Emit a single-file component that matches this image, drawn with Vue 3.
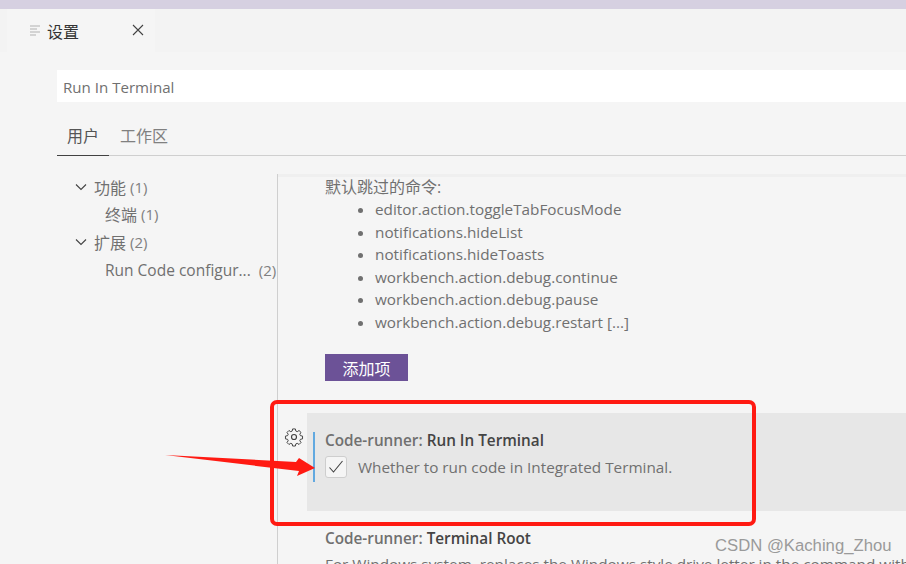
<template>
  <div class="window">
    <div class="titlebar"></div>
    <div class="tabbar">
      <div class="tab">
        <svg class="tab-icon" width="12" height="14" viewBox="0 0 12 14">
          <path d="M1 2h10M1 5h7M1 8h10M1 11h6" stroke="#c8c8c8" stroke-width="1.4" fill="none" />
        </svg>
        <span class="tab-title">设置</span>
        <svg class="tab-close" width="12" height="12" viewBox="0 0 12 12">
          <path d="M1 1l10 10M11 1L1 11" stroke="#424242" stroke-width="1.1" fill="none" />
        </svg>
      </div>
    </div>

    <div class="editor">
      <div class="search">Run In Terminal</div>
      <div class="scopes">
        <div class="scope active">用户</div>
        <div class="scope">工作区</div>
      </div>
      <div class="body">
        <ul class="tree">
          <li v-for="node in tree" :key="node.label" class="node" :class="{ child: node.child, latin: node.latin }">
            <svg v-if="!node.child" class="chevron" width="14" height="14" viewBox="0 0 14 14">
              <path d="M2 4.5l5 5 5-5" stroke="#424242" stroke-width="1.1" fill="none" />
            </svg>
            <span class="node-label">{{ node.label }}</span>
            <span class="node-count">({{ node.count }})</span>
          </li>
        </ul>
        <div class="settings">
          <div class="shadow"></div>
          <div class="intro">默认跳过的命令:</div>
          <ul class="commands">
            <li v-for="cmd in commands" :key="cmd">{{ cmd }}</li>
          </ul>
          <button class="add">添加项</button>

          <div class="row">
            <svg class="gear" width="20" height="20" viewBox="0 0 24 24" fill="none" stroke="#424242" stroke-width="1.4" stroke-linejoin="round">
              <circle cx="12" cy="12" r="3" />
              <path d="M10 2h4l.6 3 2 .9 2.6-1.7 2.8 2.8-1.7 2.6.9 2 3 .6v4l-3 .6-.9 2 1.7 2.6-2.8 2.8-2.6-1.7-2 .9-.6 3h-4l-.6-3-2-.9-2.6 1.7-2.8-2.8 1.7-2.6-.9-2-3-.6v-4l3-.6.9-2-1.7-2.6 2.8-2.8 2.6 1.7 2-.9z" transform="translate(12 12) scale(.84) translate(-12 -13.5)" />
            </svg>
            <div class="row-bar"></div>
            <div class="row-main">
              <div class="row-title"><span class="cat">Code-runner: </span><b>Run In Terminal</b></div>
              <div class="check-line">
                <span class="checkbox">
                  <svg width="16" height="16" viewBox="0 0 16 16">
                    <path d="M1.5 8.5l4 4.5 9-11" stroke="#424242" stroke-width="1.1" fill="none" />
                  </svg>
                </span>
                <span>Whether to run code in Integrated Terminal.</span>
              </div>
            </div>
          </div>

          <div class="next">
            <div class="row-title"><span class="cat">Code-runner: </span><b>Terminal Root</b></div>
            <div class="next-desc">For Windows system, replaces the Windows style drive letter in the command with a Unix style root</div>
          </div>
        </div>
      </div>
    </div>

    <div class="highlight"></div>
    <svg class="arrow" width="160" height="40" viewBox="0 0 160 40">
      <path d="M0 1L131 8 134 4 150 14 132 22 134 17z" fill="#ff1a12" />
    </svg>
    <div class="watermark">CSDN @Kaching_Zhou</div>
  </div>
</template>

<script setup>
const tree = [
  { label: '功能', count: 1 },
  { label: '终端', count: 1, child: true },
  { label: '扩展', count: 2 },
  { label: 'Run Code configur...', count: 2, child: true, latin: true },
]

const commands = [
  'editor.action.toggleTabFocusMode',
  'notifications.hideList',
  'notifications.hideToasts',
  'workbench.action.debug.continue',
  'workbench.action.debug.pause',
  'workbench.action.debug.restart [...]',
]
</script>

<style>
html, body {
  margin: 0;
  overflow: hidden;
}
</style>

<style scoped>
.window {
  position: relative;
  width: 906px;
  height: 564px;
  overflow: hidden;
  display: flex;
  flex-direction: column;
  background: #f5f5f5;
  color: #707070;
  font-family: "Open Sans", "Noto Sans CJK SC", sans-serif;
  font-size: 15.3px;
}
.titlebar {
  height: 9px;
  flex: none;
  background: #d6d0e1;
}
.tabbar {
  height: 43px;
  flex: none;
  padding-left: 7px;
  background: #f3f3f3;
  display: flex;
}
.tab {
  width: 148px;
  background: #f5f5f5;
  display: flex;
  align-items: center;
  padding: 0 0 0 22px;
  box-sizing: border-box;
}
.tab-icon { flex: none; }
.tab-title {
  margin-left: 6px;
  color: #333;
  font-size: 16px;
}
.tab-close { margin-left: 53px; margin-top: -1px; }
.editor {
  flex: 1;
  min-height: 0;
  display: flex;
  flex-direction: column;
  padding-left: 57px;
}
.search {
  margin-top: 18px;
  height: 32px;
  line-height: 34px;
  padding-left: 6px;
  background: #fff;
  font-size: 15.1px;
  flex: none;
}
.scopes {
  margin-top: 16px;
  height: 38px;
  flex: none;
  display: flex;
  border-bottom: 1px solid #cfcfcf;
  box-sizing: border-box;
}
.scope {
  padding: 0 10px;
  line-height: 37px;
  font-size: 16px;
  color: #808080;
  height: 38px;
  box-sizing: border-box;
}
.scope.active {
  color: #555;
  border-bottom: 1px solid #424242;
  margin-right: 1px;
}
.body {
  flex: 1;
  min-height: 0;
  display: flex;
  padding-top: 18px;
}
.tree {
  list-style: none;
  margin: -1px 0 0;
  padding: 0;
  width: 220px;
  flex: none;
  box-sizing: border-box;
}
.node {
  height: 27.5px;
  display: flex;
  align-items: center;
  padding-left: 17px;
  font-size: 16px;
  white-space: nowrap;
}
.node.child { padding-left: 48px; }
.node.latin {
  font-size: 15.5px;
  padding-top: 1px;
}
.node.latin .node-count { margin-left: 8px; }
.chevron {
  margin-right: 6px;
  flex: none;
}
.node-count {
  margin-left: 4px;
  font-size: 15px;
  color: #808080;
}
.settings {
  position: relative;
  flex: 1;
  min-width: 0;
  border-left: 1px solid #cfcfcf;
  padding: 1px 0 0 47px;
}
.shadow {
  position: absolute;
  left: 0;
  right: 0;
  top: 0;
  height: 3px;
  background: #efefef;
}
.intro {
  line-height: 24px;
  height: 24px;
  font-size: 16px;
}
.commands {
  margin: -1px 0 0;
  padding: 0 0 0 50px;
  line-height: 22.6px;
}
.add {
  display: block;
  margin-top: 20.5px;
  width: 83px;
  height: 27px;
  border: 0;
  padding: 0;
  background: #6c5297;
  color: #fff;
  font: inherit;
  font-size: 16px;
}
.row {
  position: relative;
  margin: 32px 0 0 -18px;
  height: 98px;
  background: #e7e7e7;
  display: flex;
  padding-top: 18px;
  box-sizing: border-box;
}
.gear {
  position: absolute;
  left: -23px;
  top: 14px;
}
.row-bar {
  position: absolute;
  left: 6px;
  top: 19px;
  width: 2px;
  height: 50px;
  background: #62a9e0;
}
.row-main {
  padding-left: 18px;
  white-space: nowrap;
}
.row-title {
  line-height: 18px;
  white-space: nowrap;
}
.cat { font-weight: 600; }
.row-title b {
  color: #444;
  font-weight: 600;
}
.check-line {
  display: flex;
  align-items: center;
  margin-top: 7px;
}
.checkbox {
  width: 20px;
  height: 20px;
  margin-right: 11px;
  border: 1px solid #cecece;
  border-radius: 3px;
  background: #f5f5f5;
  display: flex;
  align-items: center;
  justify-content: center;
}
.next {
  margin-top: 18px;
  white-space: nowrap;
}
.next-desc {
  margin-top: 7px;
  line-height: 20px;
}
.highlight {
  position: absolute;
  left: 270px;
  top: 400px;
  width: 486px;
  height: 126px;
  box-sizing: border-box;
  border: 4px solid #ff1a12;
  border-radius: 7px;
}
.arrow {
  position: absolute;
  left: 165px;
  top: 454px;
}
.watermark {
  position: absolute;
  left: 715px;
  top: 536px;
  color: #9a9a9a;
  font-family: "Liberation Sans", sans-serif;
  font-size: 16.7px;
  white-space: nowrap;
}
</style>
